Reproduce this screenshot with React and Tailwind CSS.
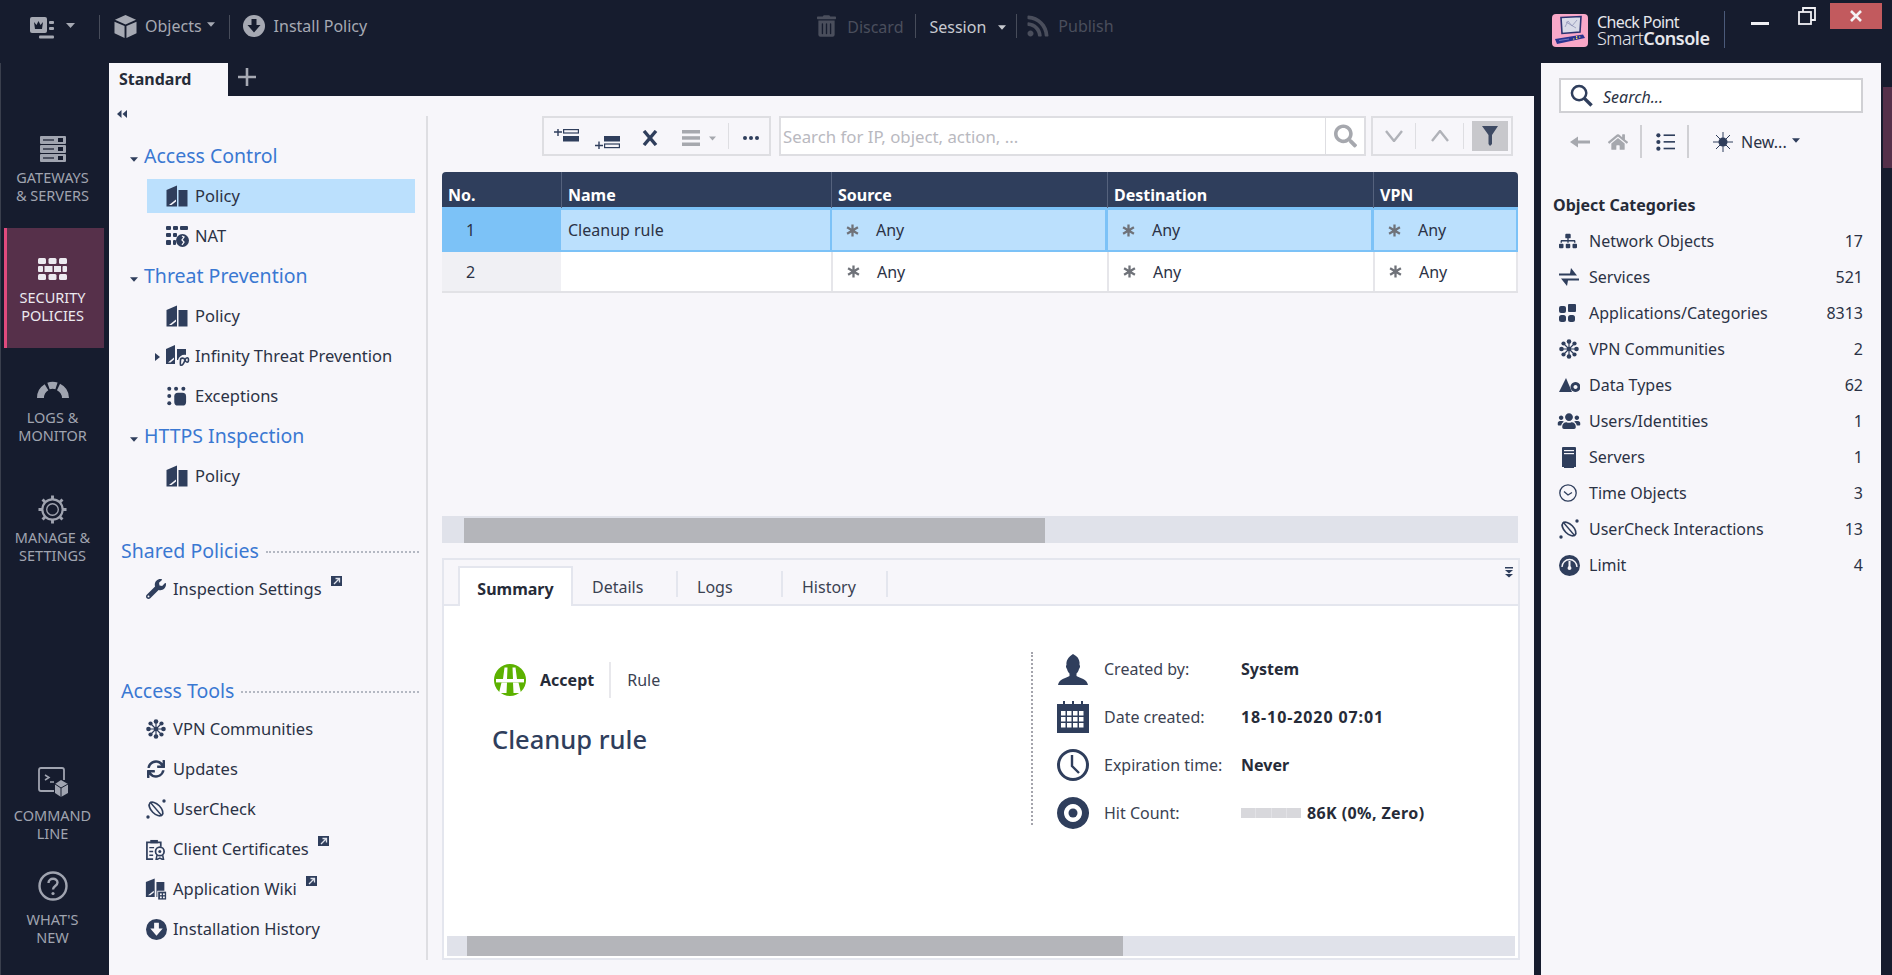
import { FaWrench, FaSync, FaHome, FaRss, FaTrashAlt, FaSitemap, FaUsers, FaSearch } from 'react-icons/fa';

const navy = '#2f3e5c';

const BookIcon = ({ className = 'w-[22px] h-[22px]' }) => (
    <svg viewBox="0 0 22 22" className={className} fill={navy}>
        <path d="M0.5 5 L11 0.5 V21.5 H0.5 Z" />
        <path d="M3 20 L10 14.5 V16.5 L5.5 20 Z" fill="#f7f6fa" />
        <path d="M12.5 5 H21.5 V21.5 H12.5 Z" />
    </svg>
);

const NatIcon = () => (
    <svg viewBox="0 0 23 22" className="w-[23px] h-[22px]" fill={navy}>
        <rect x="0" y="1" width="5" height="4" rx="1" />
        <rect x="7" y="1" width="5" height="4" rx="1" />
        <rect x="14" y="1" width="8" height="4" rx="1" />
        <rect x="0" y="8" width="5" height="4" rx="1" />
        <rect x="7" y="8" width="4" height="4" rx="1" />
        <rect x="0" y="15" width="5" height="5" rx="1" />
        <rect x="7" y="15" width="3" height="5" rx="1" />
        <circle cx="16.5" cy="15.5" r="6.5" />
        <path d="M16 11 L18 12 L16 15 L18 17 L16 20" stroke="#f7f6fa" strokeWidth="1.3" fill="none" />
    </svg>
);

const InfinityIcon = () => (
    <svg viewBox="0 0 25 24" className="w-[25px] h-[24px]" fill={navy}>
        <path d="M1 5 L10 1 V20 H1 Z" />
        <path d="M3 18.5 L9 13.5 V15.5 L5.5 18.5 Z" fill="#f7f6fa" />
        <path d="M12 5 H21 V11 C18 10 14 12 13 16 H12 Z" />
        <path d="M15.5 16 C15.5 13.5 19 13.5 20 16 C21 19 23.5 19 23.5 16 C23.5 13 21 13 20 16 C19 19 17.5 22 15.5 21 C15 19 15.5 17 15.5 16Z" fill="none" stroke={navy} strokeWidth="1.6" />
    </svg>
);

const ExceptionsIcon = () => (
    <svg viewBox="0 0 22 22" className="w-[20px] h-[20px]" fill={navy}>
        <circle cx="2.5" cy="3" r="2.2" />
        <circle cx="10" cy="3" r="2.2" />
        <circle cx="18" cy="3" r="2.2" />
        <circle cx="2.5" cy="11" r="2.2" />
        <circle cx="2.5" cy="19" r="2.2" />
        <rect x="8" y="7.5" width="13" height="14" rx="4" />
    </svg>
);

const ExternalIcon = () => (
    <svg viewBox="0 0 11 10" className="w-[11px] h-[10px] mb-[16px] ml-[9px]">
        <rect width="11" height="10" fill={navy} />
        <path d="M3 8 L8 3 M4.5 2.5 H8.5 V6.5" stroke="#dfe3ec" strokeWidth="1.3" fill="none" />
    </svg>
);

const VpnIcon = () => (
    <svg viewBox="0 0 20 20" className="w-[20px] h-[20px]" fill={navy} stroke={navy}>
        <path d="M10 3 V17 M3 10 H17 M5 5 L15 15 M15 5 L5 15" strokeWidth="1.2" />
        <g stroke="none">
            <circle cx="10" cy="2.5" r="2.3" />
            <circle cx="10" cy="17.5" r="2.3" />
            <circle cx="2.5" cy="10" r="2.3" />
            <circle cx="17.5" cy="10" r="2.3" />
            <circle cx="4.5" cy="4.5" r="2.1" />
            <circle cx="15.5" cy="4.5" r="2.1" />
            <circle cx="4.5" cy="15.5" r="2.1" />
            <circle cx="15.5" cy="15.5" r="2.1" />
            <circle cx="10" cy="10" r="2.3" />
        </g>
    </svg>
);

const UserCheckIcon = () => (
    <svg viewBox="0 0 20 20" className="w-[20px] h-[20px]" fill="none" stroke={navy}>
        <ellipse cx="10" cy="10" rx="8.5" ry="4.6" transform="rotate(45 10 10)" strokeWidth="1.7" />
        <path d="M4 3 L16 17" strokeWidth="1.4" />
        <circle cx="18" cy="2" r="1.7" fill={navy} stroke="none" />
        <circle cx="2" cy="18" r="1.7" fill={navy} stroke="none" />
    </svg>
);

const CertIcon = () => (
    <svg viewBox="0 0 22 22" className="w-[22px] h-[21px]" fill="none" stroke={navy}>
        <path d="M8 21 H1.5 V3.5 H16 V8" strokeWidth="1.8" />
        <rect x="5" y="1" width="8" height="3.5" fill={navy} stroke="none" />
        <path d="M4 9 H9 M4 13 H8 M4 17 H8" strokeWidth="1.5" />
        <circle cx="15" cy="13" r="4.5" strokeWidth="1.8" />
        <circle cx="15" cy="13" r="1.6" fill={navy} stroke="none" />
        <path d="M12 17 L11 22 L15 20 L19 22 L18 17" strokeWidth="1.6" />
    </svg>
);

const WikiIcon = () => (
    <svg viewBox="0 0 25 24" className="w-[24px] h-[24px]" fill={navy}>
        <path d="M1 4 L11 0 V21 H1 Z" />
        <path d="M3.5 19 L10 14 V16 L6 19 Z" fill="#f7f6fa" />
        <path d="M13 4 H22 V14 H14 V21 H13 Z" />
        <rect x="15" y="15" width="9" height="9" />
        <rect x="17" y="17" width="2" height="2" fill="#f7f6fa" />
        <rect x="20.5" y="17" width="2" height="2" fill="#f7f6fa" />
        <rect x="17" y="20.5" width="2" height="2" fill="#f7f6fa" />
        <rect x="20.5" y="20.5" width="2" height="2" fill="#f7f6fa" />
    </svg>
);

const DownCircle = ({ className, color = navy, inner = '#f7f6fa' }) => (
    <svg viewBox="0 0 22 22" className={className}>
        <circle cx="11" cy="11" r="11" fill={color} />
        <path d="M8.5 4 H13.5 V10 H17.5 L11 17.5 L4.5 10 H8.5 Z" fill={inner} />
    </svg>
);

const Caret = ({ color = navy, className = 'w-[9px] h-[5px]' }) => (
    <svg viewBox="0 0 9 5" className={className} fill={color}>
        <path d="M0 0 H9 L4.5 5 Z" />
    </svg>
);

const NavHead = ({ children }) => (
    <div className="h-[40px] flex items-center pl-[21px]">
        <Caret className="w-[8px] h-[5px] mt-[6px] mr-[6px]" />
        <span className="text-[19.5px] text-[#3a78d2]">{children}</span>
    </div>
);

const NavRow = ({ icon, children, active, arrow }) => (
    <div className="h-[40px] py-[3px] pl-[38px] pr-[11px]">
        <div className={`h-[34px] flex items-center ${active ? 'bg-[#bbe0fd]' : ''}`}>
            <div className="w-[48px] flex items-center justify-center pl-[12px] relative shrink-0">
                {arrow && (
                    <svg viewBox="0 0 5 8" className="w-[5px] h-[8px] absolute left-[8px] top-[9px]" fill={navy}>
                        <path d="M0 0 L5 4 L0 8 Z" />
                    </svg>
                )}
                {icon}
            </div>
            <span className="text-[16.5px] text-[#2b3245] whitespace-nowrap">{children}</span>
        </div>
    </div>
);

const ToolRow = ({ icon, children, ext }) => (
    <div className="h-[40px] flex items-center pl-[36px]">
        <div className="w-[28px] flex items-center justify-center pr-[6px] shrink-0">{icon}</div>
        <span className="text-[16.5px] text-[#2b3245] whitespace-nowrap">{children}</span>
        {ext && <ExternalIcon />}
    </div>
);

const SectionHead = ({ children }) => (
    <div className="h-[36px] flex items-center pl-[12px] pr-[7px]">
        <span className="text-[19.5px] text-[#3a78d2] whitespace-nowrap">{children}</span>
        <div className="flex-1 ml-[7px] mt-[2px] border-t-2 border-dotted border-[#b4b8c2]" />
    </div>
);

const SideItem = ({ icon, lines, active, gap = 'mt-[4px]', height = 'h-[120px]' }) => (
    <div className={`${height} pt-[26px] w-[100px] ml-[3px] ${active ? 'bg-[#56304a] border-l-[3px] border-[#e04a7d] text-[#eceaf0]' : 'text-[#a0a4b0]'}`}>
        <div className={`w-[103px] ${active ? '-ml-[6px]' : '-ml-[3px]'}`}>
            <div className="h-[30px] flex items-center justify-center">{icon}</div>
            <div className={`${gap} text-[14.5px] leading-[18px] text-center`}>
                {lines.map((l) => (
                    <div key={l}>{l}</div>
                ))}
            </div>
        </div>
    </div>
);

const Sidebar = () => (
    <div className="w-[109px] shrink-0 flex flex-col border-l border-[#3a3f4d]">
        <div className="h-[45px]" />
        <SideItem
            lines={['GATEWAYS', '& SERVERS']}
            icon={
                <svg viewBox="0 0 26 26" className="w-[26px] h-[26px]" fill="#a0a4b0">
                    {[0, 9, 18].map((y) => (
                        <g key={y}>
                            <rect x="0" y={y} width="26" height="8" rx="1" />
                            <rect x="3" y={y + 3.4} width="11" height="1.2" fill="#161c2e" />
                            <rect x="18" y={y + 2} width="5" height="4" fill="#161c2e" />
                        </g>
                    ))}
                </svg>
            }
        />
        <SideItem
            active
            lines={['SECURITY', 'POLICIES']}
            icon={
                <svg viewBox="0 0 29 22" className="w-[29px] h-[22px]" fill="#eceaf0">
                    <rect x="0" y="0" width="8" height="6" rx="1.5" />
                    <rect x="10.5" y="0" width="8" height="6" rx="1.5" />
                    <rect x="21" y="0" width="8" height="6" rx="1.5" />
                    <rect x="0" y="8" width="5" height="6" rx="1" />
                    <rect x="6.5" y="8" width="8" height="6" />
                    <rect x="16" y="8" width="7" height="6" />
                    <rect x="24.5" y="8" width="4.5" height="6" rx="1" />
                    <rect x="0" y="16" width="8" height="6" rx="1.5" />
                    <rect x="10.5" y="16" width="8" height="6" rx="1.5" />
                    <rect x="21" y="16" width="8" height="6" rx="1.5" />
                </svg>
            }
        />
        <SideItem
            lines={['LOGS &', 'MONITOR']}
            icon={
                <svg viewBox="0 0 32 18" className="w-[32px] h-[18px]" fill="none" stroke="#a0a4b0" strokeWidth="7">
                    <path d="M3.5 18 A12.5 12.5 0 0 1 9.5 7.3" />
                    <path d="M11.5 6 A12.5 12.5 0 0 1 19.5 5.9" />
                    <path d="M21.5 7 A12.5 12.5 0 0 1 28.5 18" />
                </svg>
            }
        />
        <SideItem
            lines={['MANAGE &', 'SETTINGS']}
            icon={
                <svg viewBox="0 0 30 30" className="w-[29px] h-[29px]" fill="none" stroke="#a0a4b0">
                    <circle cx="15" cy="15" r="10.5" strokeWidth="2.2" />
                    <circle cx="15" cy="15" r="6" strokeWidth="1.4" />
                    <path
                        d="M15 0.5 V5 M15 25 V29.5 M0.5 15 H5 M25 15 H29.5 M4.7 4.7 L8 8 M22 22 L25.3 25.3 M25.3 4.7 L22 8 M8 22 L4.7 25.3"
                        strokeWidth="3"
                    />
                </svg>
            }
        />
        <div className="flex-1" />
        <SideItem
            height="h-[104px]"
            gap="mt-[9px]"
            lines={['COMMAND', 'LINE']}
            icon={
                <svg viewBox="0 0 30 30" className="w-[30px] h-[30px]" fill="none" stroke="#a0a4b0">
                    <path d="M16 24 H3 Q1 24 1 22 V3 Q1 1 3 1 H24 Q26 1 26 3 V13" strokeWidth="1.8" />
                    <path d="M7 8 L11 10.5 L7 13 M12 15 H16" strokeWidth="1.5" />
                    <path d="M23 13 L30 17 V26 L23 30 L17 26 V17 Z" fill="#a0a4b0" stroke="none" />
                    <path d="M17 17 L23 21 L30 17 M23 21 V30" stroke="#161c2e" strokeWidth="1" />
                </svg>
            }
        />
        <SideItem
            height="h-[130px]"
            gap="mt-[9px]"
            lines={["WHAT'S", 'NEW']}
            icon={
                <svg viewBox="0 0 30 30" className="w-[30px] h-[30px]" fill="none" stroke="#a0a4b0">
                    <circle cx="15" cy="15" r="13.5" strokeWidth="2.4" />
                    <path d="M10.5 12 C10.5 6.5 19.5 6.5 19.5 11.5 C19.5 15 15 15 15 18.5" strokeWidth="2.4" />
                    <circle cx="15" cy="22.5" r="1.6" fill="#a0a4b0" stroke="none" />
                </svg>
            }
        />
    </div>
);

const TopBar = () => (
    <div className="h-[63px] flex shrink-0 text-[16px] text-[#a6a9b3] relative">
        <div className="w-[30px]" />
        <div className="flex items-start pt-[15px] h-full">
            <svg viewBox="0 0 25 22" className="w-[25px] h-[22px] mt-[2px]" fill="#a6a9b3">
                <rect x="0" y="0" width="17" height="16" rx="2" />
                <path d="M4 5 L6.5 8 L8.5 4 L10.5 8 L13 5 L12 12 H5 Z" fill="#161c2e" />
                <rect x="19" y="4" width="5" height="3" rx="1" />
                <rect x="19" y="10" width="5" height="3" rx="1" />
                <rect x="9" y="18.5" width="15" height="3" rx="1" />
            </svg>
            <Caret color="#a6a9b3" className="w-[9px] h-[5px] ml-[11px] mt-[8px]" />
            <div className="w-px h-[24px] bg-[#474c5a] ml-[24px]" />
            <svg viewBox="0 0 24 24" className="w-[23px] h-[23px] ml-[14px]" fill="#a6a9b3">
                <path d="M12 0 L23 5 L12 10 L1 5 Z" />
                <path d="M0.5 7 L11 11.5 V24 L0.5 19 Z" />
                <path d="M13 11.5 L23.5 7 V19 L13 24 Z" />
            </svg>
            <span className="ml-[8px] leading-[22px]">Objects</span>
            <Caret color="#a6a9b3" className="w-[8px] h-[5px] ml-[5px] mt-[7px]" />
            <div className="w-px h-[24px] bg-[#474c5a] ml-[14px]" />
            <DownCircle className="w-[22px] h-[22px] ml-[13px]" color="#a6a9b3" inner="#161c2e" />
            <span className="ml-[9px] leading-[22px]">Install Policy</span>
        </div>
        <div className="flex items-start pt-[14px] h-full ml-[450px]">
            <FaTrashAlt className="w-[19px] h-[24px] text-[#4a4e5c]" />
            <span className="ml-[11px] leading-[26px] text-[#4a4e5c]">Discard</span>
            <div className="w-px h-[24px] bg-[#474c5a] ml-[12px]" />
            <span className="ml-[13px] leading-[26px] text-[#c8cad0]">Session</span>
            <Caret color="#c8cad0" className="w-[8px] h-[5px] ml-[12px] mt-[11px]" />
            <div className="w-px h-[24px] bg-[#474c5a] ml-[10px]" />
            <FaRss className="w-[24px] h-[24px] text-[#4a4e5c] ml-[9px]" />
            <span className="ml-[8px] leading-[24px] text-[#4a4e5c]">Publish</span>
        </div>
        <div className="flex-1" />
        <div className="flex items-start w-[339px] shrink-0">
            <svg viewBox="0 0 36 33" className="w-[36px] h-[33px] mt-[14px] rounded-[4px]">
                <rect width="36" height="33" fill="#f9a8c8" />
                <path d="M9 3.5 L29 2.5 L28 18 L10 19.5 Z" fill="#d9dbe8" stroke="#2b3270" strokeWidth="1.6" />
                <path d="M13 13 L16 7 L20 12 L25 6 M14 8 L24 14" stroke="#8f94b8" strokeWidth="0.8" fill="none" />
                <path d="M3 25 L31 20.5 L33 24 L5 30 Z" fill="#2a3490" />
                <path d="M7 26.5 l10 -1.5" stroke="#7a82c8" strokeWidth="0.9" />
                <path d="M21 25 h1.4 M24 24.4 h1.4 M27 23 h1.4 M24 22.6 h1.2" stroke="#f6e05e" strokeWidth="1.2" />
            </svg>
            <div className="ml-[9px] mt-[14px] text-[#e6e7ec] w-[127px]">
                <div className="text-[16px] leading-[16px] tracking-[-0.6px]">Check Point</div>
                <div className="text-[18px] leading-[16px] tracking-[-0.5px]">
                    <span className="font-light">Smart</span>
                    <span className="font-semibold">Console</span>
                </div>
            </div>
            <div className="w-px h-[37px] bg-[#4b5a7a] mt-[11px]" />
            <div className="w-[18px] h-[3px] bg-[#f0f0f4] ml-[26px] mt-[22px]" />
            <svg viewBox="0 0 18 18" className="w-[18px] h-[18px] ml-[29px] mt-[7px]" fill="none" stroke="#f0f0f4" strokeWidth="1.8">
                <rect x="1" y="5" width="12" height="12" />
                <path d="M5 5 V1 H17 V13 H13" />
            </svg>
            <div className="w-[52px] h-[26px] bg-[#c25a5e] ml-[14px] mt-[3px] flex items-center justify-center">
                <svg viewBox="0 0 12 12" className="w-[12px] h-[12px]" stroke="#f4f2f4" strokeWidth="2.6">
                    <path d="M1 1 L11 11 M11 1 L1 11" />
                </svg>
            </div>
        </div>
        <div className="w-[1px]" />
    </div>
);

const LeftNav = () => (
    <div className="w-[319px] shrink-0 flex flex-col text-[16px]">
        <div className="h-[20px] pl-[8px] pt-[14px]">
            <svg viewBox="0 0 10 8" className="w-[10px] h-[8px]" fill={navy}>
                <path d="M4.5 0 V8 L0 4 Z M10 0 V8 L5.5 4 Z" />
            </svg>
        </div>
        <div className="flex-1 border-r-2 border-[#dedee2] mb-[15px]">
            <div className="h-[20px]" />
            <NavHead>Access Control</NavHead>
            <NavRow active icon={<BookIcon />}>Policy</NavRow>
            <NavRow icon={<NatIcon />}>NAT</NavRow>
            <NavHead>Threat Prevention</NavHead>
            <NavRow icon={<BookIcon />}>Policy</NavRow>
            <NavRow arrow icon={<InfinityIcon />}>Infinity Threat Prevention</NavRow>
            <NavRow icon={<ExceptionsIcon />}>Exceptions</NavRow>
            <NavHead>HTTPS Inspection</NavHead>
            <NavRow icon={<BookIcon />}>Policy</NavRow>
            <div className="h-[37px]" />
            <SectionHead>Shared Policies</SectionHead>
            <ToolRow ext icon={<FaWrench className="w-[20px] h-[20px]" color={navy} />}>Inspection Settings</ToolRow>
            <div className="h-[64px]" />
            <SectionHead>Access Tools</SectionHead>
            <ToolRow icon={<VpnIcon />}>VPN Communities</ToolRow>
            <ToolRow icon={<FaSync className="w-[18px] h-[20px]" color={navy} />}>Updates</ToolRow>
            <ToolRow icon={<UserCheckIcon />}>UserCheck</ToolRow>
            <ToolRow ext icon={<CertIcon />}>Client Certificates</ToolRow>
            <ToolRow ext icon={<WikiIcon />}>Application Wiki</ToolRow>
            <ToolRow icon={<DownCircle className="w-[21px] h-[21px]" />}>Installation History</ToolRow>
        </div>
    </div>
);

const RuleIcon = ({ top }) => (
    <svg viewBox="0 0 26 13" className="w-[26px] h-[13px]" fill={navy}>
        {top ? (
            <>
                <path d="M0 3 H8 M4 -1 V7" stroke={navy} strokeWidth="1.4" />
                <rect x="9.6" y="0.6" width="14.8" height="3.4" fill="#f7f6fa" stroke={navy} strokeWidth="1.2" />
                <rect x="9" y="7" width="16" height="5.5" />
            </>
        ) : (
            <>
                <path d="M0 9.5 H8 M4 5.5 V13" stroke={navy} strokeWidth="1.4" />
                <rect x="9" y="0" width="16" height="5.5" />
                <rect x="9.6" y="8" width="14.8" height="3.6" fill="#f7f6fa" stroke={navy} strokeWidth="1.2" />
            </>
        )}
    </svg>
);

const Toolbar = () => (
    <div className="flex h-[40px] ml-[114px]">
        <div className="w-[229px] border-2 border-[#dedee2] flex relative">
            <div className="ml-[10px] mt-[11px]"><RuleIcon top /></div>
            <div className="ml-[15px] mt-[18px]"><RuleIcon /></div>
            <svg viewBox="0 0 16 16" className="w-[16px] h-[16px] ml-[21px] mt-[12px]" stroke={navy} strokeWidth="3.4">
                <path d="M2 1 L14 15 M14 1 L2 15" />
            </svg>
            <svg viewBox="0 0 18 16" className="w-[18px] h-[16px] ml-[24px] mt-[12px]" fill="#a6a8ae">
                <rect width="18" height="3.5" />
                <rect y="6.2" width="18" height="3.5" />
                <rect y="12.5" width="18" height="3.5" />
            </svg>
            <Caret color="#a6a8ae" className="w-[7px] h-[5px] ml-[9px] mt-[18px]" />
            <div className="w-px h-[26px] bg-[#dedee2] ml-[12px] mt-[5px]" />
            <div className="ml-[14px] mt-[18px] flex gap-[2px]">
                <div className="w-[4px] h-[4px] rounded-full bg-[#2f3e5c]" />
                <div className="w-[4px] h-[4px] rounded-full bg-[#2f3e5c]" />
                <div className="w-[4px] h-[4px] rounded-full bg-[#2f3e5c]" />
            </div>
        </div>
        <div className="w-[587px] ml-[8px] border-2 border-[#dedee2] bg-white flex">
            <span className="flex-1 pl-[2px] text-[16.8px] leading-[38px] text-[#b9b9bf] whitespace-nowrap">Search for IP, object, action, ...</span>
            <div className="w-[39px] border-l border-[#dedee2] flex items-center justify-center">
                <FaSearch className="w-[23px] h-[24px] text-[#a6a8ae]" />
            </div>
        </div>
        <div className="w-[142px] ml-[5px] border-2 border-[#dedee2] flex items-center">
            <div className="w-[42px] flex justify-center">
                <svg viewBox="0 0 18 12" className="w-[18px] h-[12px]" fill="none" stroke="#b0b2b8" strokeWidth="2.4"><path d="M1 1 L9 11 L17 1" /></svg>
            </div>
            <div className="w-px h-[26px] bg-[#dedee2]" />
            <div className="w-[47px] flex justify-center">
                <svg viewBox="0 0 18 12" className="w-[18px] h-[12px]" fill="none" stroke="#b0b2b8" strokeWidth="2.4"><path d="M1 11 L9 1 L17 11" /></svg>
            </div>
            <div className="w-px h-[26px] bg-[#dedee2]" />
            <div className="w-[36px] h-[30px] ml-[8px] bg-[#c8c8cc] flex items-center justify-center">
                <svg viewBox="0 0 16 20" className="w-[16px] h-[20px]" fill="#3e4a63"><path d="M0 0 H16 L10 9 V18 L8 20 L6.5 18 V9 Z" /></svg>
            </div>
        </div>
    </div>
);

const Star = () => (
    <svg viewBox="0 0 12 12" className="w-[13px] h-[13px]" stroke="#6f7279" strokeWidth="2.1">
        <path d="M6 0.5 V11.5 M1 3 L11 9 M11 3 L1 9" />
    </svg>
);

const AnyCell = ({ selected, last }) => (
    <div className={`flex items-center pl-[14px] text-[16px] text-[#2b3245] ${selected ? 'bg-[#bbe0fd] border-2 border-[#7cc2f7] -ml-px' : 'border-l-2 border-[#e6e6ea]'} ${last && !selected ? 'border-r-2' : ''}`}>
        <Star />
        <span className="ml-[17px]">Any</span>
    </div>
);

const RuleTable = () => (
    <div className="ml-[14px] w-[1076px] mt-[16px] text-[16px]">
        <div className="grid grid-cols-[119px_270px_276px_266px_145px] h-[35px] bg-[#2f3e5c] rounded-t-[4px] font-bold text-white">
            <div className="pl-[6px] leading-[46px]">No.</div>
            <div className="pl-[6px] leading-[46px] border-l border-[#55627d]">Name</div>
            <div className="pl-[6px] leading-[46px] border-l border-[#55627d]">Source</div>
            <div className="pl-[6px] leading-[46px] border-l border-[#55627d]">Destination</div>
            <div className="pl-[6px] leading-[46px] border-l border-[#55627d]">VPN</div>
        </div>
        <div className="grid grid-cols-[119px_270px_276px_266px_145px] h-[45px] bg-[#7cc2f7] pt-[1px]">
            <div className="pl-[24px] flex items-center text-[#2b3245]">1</div>
            <div className="pl-[7px] flex items-center bg-[#bbe0fd] border-y-2 border-[#7cc2f7] text-[#2b3245]">Cleanup rule</div>
            <AnyCell selected />
            <AnyCell selected />
            <AnyCell selected />
        </div>
        <div className="grid grid-cols-[119px_270px_276px_266px_145px] h-[41px] bg-white border-b-2 border-[#e2e2e6]">
            <div className="pl-[24px] flex items-center bg-[#f0f0f4] text-[#2b3245]">2</div>
            <div />
            <AnyCell />
            <AnyCell />
            <AnyCell last />
        </div>
    </div>
);

const ScrollBar = ({ trackCls, thumbCls }) => (
    <div className={`bg-[#e0e2ea] flex shrink-0 ${trackCls}`}>
        <div className={`bg-[#b4b5ba] ${thumbCls}`} />
    </div>
);

const DetailRow = ({ icon, label, children, valueCls = '' }) => (
    <div className="flex items-center h-[48px]">
        <div className="w-[32px] flex justify-center shrink-0">{icon}</div>
        <span className="ml-[15px] w-[137px] text-[16px] text-[#3b4252] whitespace-nowrap">{label}</span>
        <div className={`font-bold text-[16px] text-[#262b38] flex items-center whitespace-nowrap ${valueCls}`}>{children}</div>
    </div>
);

const DetailPanel = () => (
    <div className="ml-[14px] mt-[15px] w-[1078px] h-[402px] border-2 border-[#e4e6ee] flex flex-col bg-white">
        <div className="h-[46px] shrink-0 bg-[#f7f6fa] border-b-2 border-[#e4e6ee] flex items-end relative">
            <div className="ml-[14px] w-[115px] h-[40px] bg-white border-x-2 border-t-2 border-[#e4e6ee] -mb-[2px] text-center font-bold text-[16px] text-[#262b38] leading-[42px]">Summary</div>
            {['Details', 'Logs', 'History'].map((t) => (
                <div key={t} className="w-[105px] h-[36px] pl-[19px] text-[16px] text-[#3b4252] leading-[38px] flex">
                    <span className="flex-1">{t}</span>
                    <div className="w-[2px] h-[26px] mt-[3px] bg-[#e4e6ee]" />
                </div>
            ))}
            <div className="absolute right-[5px] top-[7px]">
                <svg viewBox="0 0 8 11" className="w-[8px] h-[11px]" fill={navy}>
                    <path d="M0 0 H8 V1.5 H0 Z M0 3 H8 L4 6.5 Z M0 7 H8 L4 10.5 Z" />
                </svg>
            </div>
        </div>
        <div className="flex-1 flex relative min-h-0">
            <div className="w-[587px] pl-[50px] pt-[56px] shrink-0">
                <div className="flex items-center h-[36px]">
                    <svg viewBox="0 0 32 32" className="w-[32px] h-[32px]">
                        <circle cx="16" cy="16" r="16" fill="#5cb100" />
                        <path d="M10.5 3.5 H13.5 L13 15 H9 Z M18.5 3.5 H21.5 L23 15 H19 Z" fill="#fff" />
                        <rect x="2" y="15" width="28" height="3.4" fill="#fff" />
                        <path d="M7.5 18.4 H13 L12.5 29 H5 Z M19 18.4 H24.5 L27 29 H19.5 Z" fill="#fff" />
                    </svg>
                    <span className="ml-[14px] font-bold text-[16px] text-[#262b38]">Accept</span>
                    <div className="ml-[15px] w-[2px] h-[36px] bg-[#e8e8ec]" />
                    <span className="ml-[16px] text-[16px] text-[#3b4252]">Rule</span>
                </div>
                <div className="mt-[22px] -ml-[2px] text-[25.5px] font-medium text-[#2f3e5c]">Cleanup rule</div>
            </div>
            <div className="mt-[46px] h-[173px] border-l-2 border-dotted border-[#a4a4ac]" />
            <div className="ml-[24px] mt-[39px]">
                <DetailRow
                    label="Created by:"
                    icon={
                        <svg viewBox="0 0 30 31" className="w-[30px] h-[31px]" fill={navy}>
                            <path d="M15 0 L18 2 C21 4 22 8 21.5 11 C22.5 11.5 22 14 21 15 C20.5 17 19.5 18.5 18.5 19.5 V22 C22 24 29 25 30 31 H0 C1 25 8 24 11.5 22 V19.5 C10.5 18.5 9.5 17 9 15 C8 14 7.5 11.5 8.5 11 C8 7 10 3 15 0 Z" />
                        </svg>
                    }
                >
                    System
                </DetailRow>
                <DetailRow
                    label="Date created:"
                    valueCls="tracking-[0.9px]"
                    icon={
                        <svg viewBox="0 0 32 32" className="w-[32px] h-[32px]" fill={navy}>
                            <path d="M0 3 H6 V0 H8 V3 H15 V0 H17 V3 H24 V0 H26 V3 H32 V32 H0 Z" />
                            {[9, 15, 21].map((y) =>
                                [4, 10, 16, 22].map((x) => <rect key={x + '-' + y} x={x} y={y + 1} width="4.5" height="4.5" fill="#fff" />)
                            )}
                        </svg>
                    }
                >
                    18-10-2020 07:01
                </DetailRow>
                <DetailRow
                    label="Expiration time:"
                    icon={
                        <svg viewBox="0 0 32 32" className="w-[32px] h-[32px]" fill="none" stroke={navy}>
                            <circle cx="16" cy="16" r="14.5" strokeWidth="3" />
                            <path d="M15 6 V17 L22 24" strokeWidth="2.4" />
                        </svg>
                    }
                >
                    Never
                </DetailRow>
                <DetailRow
                    label="Hit Count:"
                    valueCls="tracking-[0.4px]"
                    icon={
                        <svg viewBox="0 0 32 32" className="w-[32px] h-[32px]" fill={navy}>
                            <path d="M16 0 A16 16 0 1 0 16.01 0 Z M16 7 A9 9 0 1 1 15.99 7 Z" fillRule="evenodd" />
                            <circle cx="16" cy="16" r="4.5" />
                        </svg>
                    }
                >
                    <div className="w-[60px] h-[10px] mr-[6px] flex gap-px bg-[#e2e2e6]">
                        <div className="flex-1 bg-[#d8d8dc]" />
                        <div className="flex-1 bg-[#d8d8dc]" />
                        <div className="flex-1 bg-[#d8d8dc]" />
                        <div className="flex-1 bg-[#d8d8dc]" />
                    </div>
                    86K (0%, Zero)
                </DetailRow>
            </div>
        </div>
        <ScrollBar trackCls="h-[20px] mx-[3px] mb-[2px]" thumbCls="ml-[20px] w-[656px]" />
    </div>
);

const RightPanel = () => (
    <div className="w-[340px] shrink-0 bg-[#f7f6fa] px-[18px] pt-[15px] flex flex-col text-[16px] text-[#2b3245]">
        <div className="h-[35px] w-[304px] shrink-0 border-2 border-[#d0d0d4] bg-white flex items-center pl-[9px]">
            <svg viewBox="0 0 24 24" className="w-[23px] h-[23px]" fill="none" stroke={navy}>
                <circle cx="9.5" cy="9.5" r="7.5" strokeWidth="2.6" />
                <path d="M15 15 L22.5 22.5" strokeWidth="3.6" />
            </svg>
            <span className="ml-[10px] italic text-[#2b3245] leading-[34px] pt-[2px]">Search...</span>
        </div>
        <div className="h-[33px] mt-[12px] shrink-0 flex items-center">
            <svg viewBox="0 0 20 12" className="w-[20px] h-[12px] ml-[11px]" fill="#a6a8ae">
                <path d="M0 6 L8 0.5 V4.5 H20 V7.5 H8 V11.5 Z" />
            </svg>
            <FaHome className="w-[20px] h-[20px] ml-[18px] text-[#a6a8ae]" />
            <div className="w-[2px] h-[33px] bg-[#d0d0d4] ml-[12px]" />
            <svg viewBox="0 0 20 20" className="w-[19px] h-[20px] ml-[14px]" fill={navy}>
                <circle cx="2.5" cy="3" r="2.2" />
                <circle cx="2.5" cy="10" r="2.2" />
                <circle cx="2.5" cy="17" r="2.2" />
                <rect x="8" y="2" width="12" height="1.7" />
                <rect x="8" y="9" width="12" height="1.7" />
                <rect x="8" y="16" width="12" height="1.7" />
            </svg>
            <div className="w-[2px] h-[33px] bg-[#d0d0d4] ml-[12px]" />
            <svg viewBox="0 0 20 20" className="w-[20px] h-[20px] ml-[24px]" stroke={navy} fill={navy}>
                <path d="M10 0 V20 M0 10 H20 M3 3 L17 17 M17 3 L3 17" strokeWidth="1" />
                <circle cx="10" cy="10" r="4.5" stroke="none" />
            </svg>
            <span className="ml-[8px]">New...</span>
            <Caret className="w-[8px] h-[5px] ml-[5px] -mt-[2px]" />
        </div>
        <div className="-ml-[6px] mt-[35px] font-bold text-[16px] text-[#262b38] leading-[24px]">Object Categories</div>
        <div className="mt-[6px] w-[310px] -ml-[6px]">
            {categories.map((c) => (
                <div key={c.name} className="flex items-center h-[36px]">
                    <div className="w-[36px] pl-[6px] shrink-0">{c.icon}</div>
                    <span className="flex-1 whitespace-nowrap">{c.name}</span>
                    <span>{c.count}</span>
                </div>
            ))}
        </div>
    </div>
);

const categories = [
    { name: 'Network Objects', count: 17, icon: <FaSitemap className="w-[18px] h-[18px]" color={navy} /> },
    {
        name: 'Services',
        count: 521,
        icon: (
            <svg viewBox="0 0 20 18" className="w-[20px] h-[18px]" fill={navy}>
                <path d="M12 0 L18 7.5 H0 V5.5 H11 Z M8 18 L2 10.5 H20 V12.5 H9 Z" />
            </svg>
        ),
    },
    {
        name: 'Applications/Categories',
        count: 8313,
        icon: (
            <svg viewBox="0 0 18 18" className="w-[18px] h-[18px]" fill={navy}>
                <rect x="0" y="2" width="7" height="7" rx="2" />
                <rect x="9" y="0" width="8" height="8" rx="1" />
                <rect x="0" y="11" width="7" height="7" rx="2.5" />
                <rect x="9" y="11" width="7" height="7" rx="2.5" />
            </svg>
        ),
    },
    { name: 'VPN Communities', count: 2, icon: <VpnIcon /> },
    {
        name: 'Data Types',
        count: 62,
        icon: (
            <svg viewBox="0 0 21 14" className="w-[21px] h-[14px]" fill={navy}>
                <path d="M7 0 L13 14 H0 Z" />
                <path d="M16.5 4 A5 5 0 1 0 16.51 4 Z M16.5 7 A2 2 0 1 1 16.49 7 Z" fillRule="evenodd" />
            </svg>
        ),
    },
    { name: 'Users/Identities', count: 1, icon: <FaUsers className="w-[24px] h-[18px] -ml-[2px]" color={navy} /> },
    {
        name: 'Servers',
        count: 1,
        icon: (
            <svg viewBox="0 0 14 21" className="w-[14px] h-[21px] ml-[3px]" fill={navy}>
                <path d="M1 0 H13 Q14 0 14 1 V20 H12 V21 H2 V20 H0 V1 Q0 0 1 0 Z" />
                <rect x="2" y="3" width="10" height="1.2" fill="#f7f6fa" />
                <rect x="2" y="6" width="10" height="1.2" fill="#f7f6fa" />
            </svg>
        ),
    },
    {
        name: 'Time Objects',
        count: 3,
        icon: (
            <svg viewBox="0 0 18 18" className="w-[18px] h-[18px]" fill="none" stroke={navy} strokeWidth="1.3">
                <circle cx="9" cy="9" r="8.2" />
                <path d="M5 7.5 L9 11 L13 8.5" />
            </svg>
        ),
    },
    { name: 'UserCheck Interactions', count: 13, icon: <UserCheckIcon /> },
    {
        name: 'Limit',
        count: 4,
        icon: (
            <svg viewBox="0 0 21 21" className="w-[21px] h-[21px]">
                <circle cx="10.5" cy="10.5" r="10.5" fill={navy} />
                <path d="M3 12 A7.5 7.5 0 0 1 18 12" fill="none" stroke="#f7f6fa" strokeWidth="1.4" />
                <path d="M9.5 6 H11.5 L11.5 11 L12.5 13 A2 2 0 1 1 8.5 13 L9.5 11 Z" fill="#f7f6fa" />
            </svg>
        ),
    },
];

const App = () => {
    return (
        <div className="w-[1892px] h-[975px] bg-[#161c2e] flex flex-col overflow-hidden font-['Noto_Sans',sans-serif]">
            <TopBar />
            <div className="flex-1 flex min-h-0">
                <Sidebar />
                <div className="w-[1425px] shrink-0 flex flex-col">
                    <div className="h-[33px] flex shrink-0">
                        <div className="w-[119px] bg-[#f7f6fa] pl-[10px] font-bold text-[16px] text-[#262b38] leading-[32px]">Standard</div>
                        <svg viewBox="0 0 18 18" className="w-[18px] h-[18px] ml-[10px] mt-[5px]" stroke="#a6a9b3" strokeWidth="2.6">
                            <path d="M9 0 V18 M0 9 H18" />
                        </svg>
                    </div>
                    <div className="flex-1 bg-[#f7f6fa] flex min-h-0">
                        <LeftNav />
                        <div className="flex-1 pt-[20px] flex flex-col">
                            <Toolbar />
                            <RuleTable />
                            <ScrollBar trackCls="ml-[14px] w-[1076px] h-[27px] mt-[223px] pt-[2px]" thumbCls="ml-[22px] w-[581px]" />
                            <DetailPanel />
                        </div>
                    </div>
                </div>
                <div className="w-[7px]" />
                <RightPanel />
                <div className="flex-1 flex flex-col">
                    <div className="h-[24px]" />
                    <div className="h-[81px] bg-[#55304a] ml-[2px]" />
                </div>
            </div>
        </div>
    );
};

export default App;
